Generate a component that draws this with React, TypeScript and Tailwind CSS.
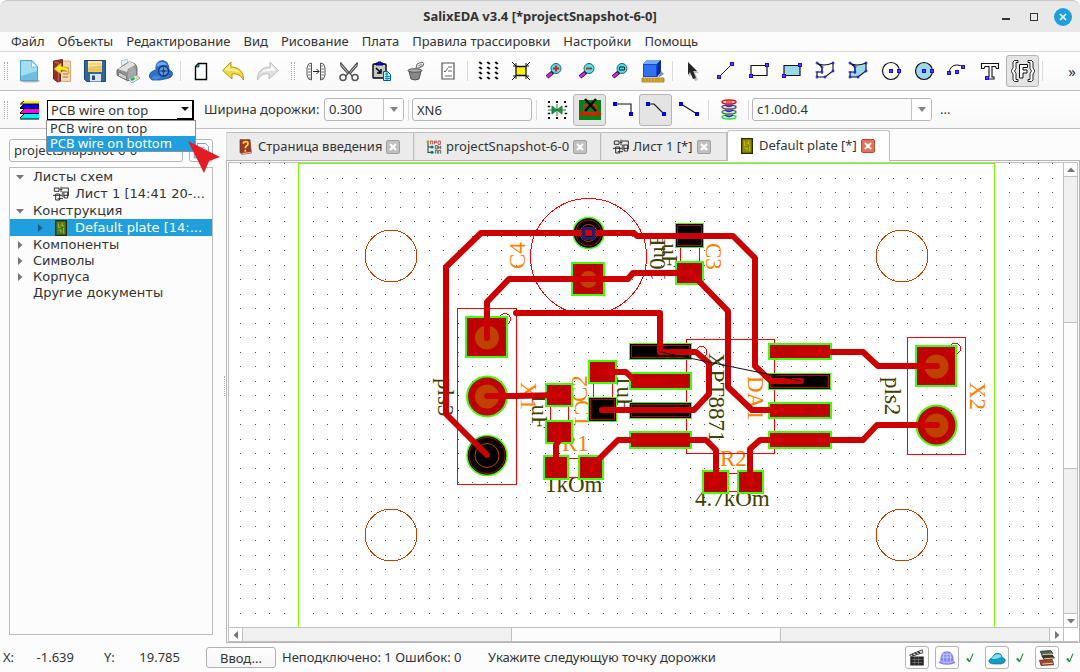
import type { ReactNode } from "react";

const menuItems = [
  "Файл",
  "Объекты",
  "Редактирование",
  "Вид",
  "Рисование",
  "Плата",
  "Правила трассировки",
  "Настройки",
  "Помощь",
];

function Icon({ children, size = 24 }: { children: ReactNode; size?: number }) {
  return (
    <svg width={size} height={size} viewBox="0 0 24 24" fill="none" stroke="none" className="shrink-0">
      {children}
    </svg>
  );
}

// small square handle used on the drawing tools
function Knob({ x, y }: { x: number; y: number }) {
  return (
    <>
      <rect x={x - 2} y={y - 2} width="4" height="4" fill="#1010e8" />
      <rect x={x - 1} y={y - 1} width="2" height="2" fill="#7a30e0" />
    </>
  );
}

const gridDots = [4, 12, 20];

const NewIcon = (
  <Icon>
    <ellipse cx="13" cy="22" rx="10" ry="1.6" fill="#b5b5b5" />
    <path d="M3.5 1.5h11.500l5.500 6V21.500h-17z" fill="#6dbfe2" stroke="#4ba3cb" />
    <path d="M4 2h10.500l5.500 6v4L4 17z" fill="#a4dcf0" />
    <path d="M14.500 2v6h6z" fill="#e8f7fc" stroke="#62b2d3" strokeWidth=".7" />
  </Icon>
);

const OpenIcon = (
  <Icon>
    <path d="M8 2h12.500v20.500H10z" fill="#f0d8b4" stroke="#d8a878" />
    <path d="M13 12h6M13 15h5M13 18h5M15 9h4" stroke="#ae7442" />
    <path d="M3.500 2l9-1.500V12l-2 1v9l-3 1-4-3z" fill="#913229" stroke="#732620" />
    <path d="M4.500 3l4 1v18" stroke="#ba5b43" strokeWidth="1.300" />
    <path d="M4 10l7-6v3.500c6 0 8 2 8 7-2-3-4-3.500-8-3.500v4z" fill="#ffe52b" stroke="#bb9918" strokeWidth=".7" />
  </Icon>
);

const SaveIcon = (
  <Icon>
    <path d="M1.500 1.500h21v21H4l-2.500-2z" fill="#3266a0" stroke="#1c4576" />
    <path d="M5 2h14v11H5z" fill="#f4cb59" />
    <path d="M5 2h14v4L5 9z" fill="#ffe69b" />
    <path d="M6 5h12M6 8h12M6 11h12" stroke="#dfb352" strokeWidth=".7" />
    <path d="M7 15h11v7.500H7z" fill="#dce3ea" />
    <path d="M9 16.500h3V21H9z" fill="#24517f" />
  </Icon>
);

const PrintIcon = (
  <Icon>
    <path d="M6 8L5 2l6-2 2 7z" fill="#e3f1fc" stroke="#8fb3d4" strokeWidth=".7" />
    <path d="M1 11l7-5 5-3q7 0 8 6v7l-9 6-11-6z" fill="#939393" stroke="#5b5b5b" strokeWidth=".8" />
    <path d="M2 10l7-4 4-3q5 0 6 3l-7 4-1 3z" fill="#e2e2e2" />
    <path d="M2.500 13l8 4v4l-8-4z" fill="#d0d0d0" stroke="#666" strokeWidth=".7" />
    <path d="M12 21v-7q1-5 4-6 4 0 4 5v3z" fill="#a8a8a8" />
    <path d="M12 20l8-4 4 3-8 5z" fill="#deecf7" stroke="#6889a4" strokeWidth=".7" />
    <path d="M14 20l4-2 1 2-3 2z" fill="#35a649" />
    <path d="M19 17l3 2-2 1z" fill="#e7d933" />
  </Icon>
);

const CloudIcon = (
  <Icon>
    <path d="M3 21Q-.5 19 .5 16q1-4 6.500-5Q6 5 10 2.500q4-2.500 8 1 2 3 2 7 4 2 3.500 5t-5 4L11 21z" fill="#2c72ca" stroke="#1c509a" strokeWidth=".8" />
    <path d="M7 8q1-5 6-5 4 0 5 3-5-1-11 2z" fill="#70a9e8" />
    <circle cx="14.500" cy="12" r="5" fill="#5b96dc" stroke="#12396e" strokeWidth="1.300" />
    <circle cx="14.500" cy="12" r="1.500" fill="#163f78" />
    <path d="M14.500 7v10M9.500 12h10" stroke="#163f78" strokeWidth=".8" />
    <path d="M3 18q4-3 9 0-3 4-9 2z" fill="#4389dc" />
  </Icon>
);

const PageIcon = (
  <Icon>
    <path d="M9.500 4.500h8v16h-11v-13z" fill="#fff" stroke="#000" strokeWidth="1.400" />
    <path d="M6 8l4-4v4z" fill="#148a83" stroke="#000" strokeWidth=".6" />
  </Icon>
);

const UndoIcon = (
  <Icon>
    <path d="M.7 11.500L9 3v5c8 0 13 5 12.500 13-3-5-6-6.500-11.500-6v5z" fill="#f6d735" stroke="#ad8c16" strokeWidth=".9" />
    <path d="M2.500 11.300L8 5.500V10c5-1 9 2 11 5-3-3-7-3-10.500-3z" fill="#fff4a4" />
  </Icon>
);

const RedoIcon = (
  <Icon>
    <path d="M23.300 11.500L15 3v5C7 8 2 13 2.500 21c3-5 6-6.500 11.500-6v5z" fill="#dedede" stroke="#b9b9b9" strokeWidth=".9" />
    <path d="M21.500 11.300L16 5.500V10c-5-1-9 2-11 5 3-3 7-3 10.500-3z" fill="#fafafa" />
  </Icon>
);

const MirrorIcon = (
  <Icon>
    <g stroke="#555">
      <path d="M7.500 4v17l-3-1-1.500-4V9l1.500-4zM16.500 4v17l3-1 1.500-4V9l-1.500-4z" />
      <path d="M5 7h2M4 10h3M4 13h3M4 16h3M5 19h2M17 7h2M17 10h3M17 13h3M17 16h3M17 19h2" strokeWidth=".8" />
      <path d="M9 12.500h6M12.500 10l2.500 2.500-2.500 2.500" stroke="#222" />
    </g>
  </Icon>
);

const CutIcon = (
  <Icon>
    <path d="M3.500 3.500l12 14M20.500 3.500l-12 14M3.500 3.500L4 7l7 8M20.500 3.500L20 7l-7 8" stroke="#555" strokeWidth="1.200" />
    <circle cx="6" cy="18.500" r="3" stroke="#555" strokeWidth="1.500" />
    <circle cx="18" cy="18.500" r="3" stroke="#555" strokeWidth="1.500" />
  </Icon>
);

const PasteIcon = (
  <Icon>
    <rect x="3" y="5" width="13" height="14" rx="1" fill="#c8c8c8" stroke="#000" strokeWidth="1.400" />
    <path d="M6 6V4h2V3h3v1h2v2z" fill="#1b1bd0" stroke="#000066" />
    <path d="M6 9l5 5M11 10v4H7" stroke="#000" strokeWidth="1.500" />
    <path d="M13.500 12.500h4l3 3v6h-7z" fill="#adf3fb" stroke="#005c89" />
    <path d="M15 15h3M15 17.500h5M15 19.500h5M17 13v8" stroke="#0070b0" strokeWidth=".8" />
  </Icon>
);

const BucketIcon = (
  <Icon>
    <path d="M6 12h12l-2 8q-4 2-8 0z" fill="#888" stroke="#505050" />
    <ellipse cx="12" cy="11.500" rx="7" ry="1.800" fill="#aaa" stroke="#555" />
    <path d="M13 9l1-4 5-2q3 1 1 4l-4 2z" fill="#f2f2f2" stroke="#666" />
    <path d="M15 7l4-2M15.500 9l4-3" stroke="#777" strokeWidth=".8" />
  </Icon>
);

const PropsIcon = (
  <Icon>
    <path d="M6 4h12v16H6z" fill="#fff" stroke="#555" strokeWidth="1.200" />
    <path d="M12 8h4M12 12h4M9 17h7M8 12l1 1 3-4" stroke="#666" />
  </Icon>
);

const GridIcon = (
  <Icon>
    {gridDots.map((x) =>
      [4, 9, 14, 19].map((y) => <path key={`${x}-${y}`} d={`M${x - 1} ${y - 1}h2v1h1v1h-2v-1h-1z`} fill="#111" stroke="#111" strokeWidth=".5" />),
    )}
  </Icon>
);

const FitIcon = (
  <Icon>
    <path d="M7 7.500h10v9H7z" fill="#fff200" stroke="#111" strokeWidth="1.300" />
    <path d="M3 3l4 4M21 3l-4 4M3 21l4-4M21 21l-4-4M4 7h3V4M17 4v3h3M4 17h3v3M17 20v-3h3" stroke="#111" />
  </Icon>
);

function ZoomIcon({ children }: { children: ReactNode }) {
  return (
    <Icon>
      <path d="M5 18l6-5" stroke="#111" strokeWidth="4" />
      <path d="M5 18l5-4" stroke="#ee18ee" strokeWidth="2.500" />
      <circle cx="14" cy="9.500" r="5" fill="#48e4ed" stroke="#16666b" />
      {children}
    </Icon>
  );
}

const CubeIcon = (
  <Icon>
    <path d="M1 19h22v4H1z" fill="#e5b83c" stroke="#90650c" strokeWidth=".7" />
    <path d="M3 20v2M6 20v2M9 20v2M12 20v2M15 20v2M18 20v2M21 20v2" stroke="#6c4a07" strokeWidth=".6" />
    <path d="M2 5l4-4h14v12l-4 5H2z" fill="#1447d4" />
    <path d="M2 5l4-4h14l-4 4z" fill="#74a9ff" />
    <path d="M3 6h12v11H3z" fill="#3271ed" />
    <path d="M16 5l4-4v12l-4 5z" fill="#0a2d9c" />
    <path d="M20 12l3 3-6 4z" fill="#8d8d98" />
  </Icon>
);

const PointerIcon = (
  <Icon>
    <path d="M9 5l9 9h-4l3 7-3 1-3-7-3 3z" fill="#bbb" />
    <path d="M7 3l9 9h-4l3 7-3 1-3-7-2 3z" fill="#252525" />
  </Icon>
);

const LineIcon = (
  <Icon>
    <path d="M5 18L18 5" stroke="#222" />
    <Knob x={5} y={18} />
    <Knob x={18} y={5} />
  </Icon>
);

function RectIcon({ fill }: { fill: string }) {
  return (
    <Icon>
      <path d="M4 6.500h16v10H4z" fill={fill} stroke="#111" strokeWidth="1.200" />
      <Knob x={4} y={17} />
      <Knob x={20} y={6} />
    </Icon>
  );
}

function PolyIcon({ fill }: { fill: string }) {
  return (
    <Icon>
      <path d="M4 4q6 4 16 0v8l-8 6H4v-5h5V8z" fill={fill} stroke="#111" strokeWidth="1.100" />
      <path d="M2.500 4h3M4 2.500v3M18.500 4h3M20 2.500v3M18.500 12h3M20 10.500v3M10.500 18h3M12 16.500v3M2.500 18h3M4 16.500v3M7.500 13h3M9 8v7M2.500 13h3M7.500 8h3" stroke="#1818f0" strokeWidth="1.200" />
    </Icon>
  );
}

function CircleIcon({ fill }: { fill: string }) {
  return (
    <Icon>
      <circle cx="12" cy="12" r="8.500" fill={fill} stroke="#111" strokeWidth="1.200" />
      <Knob x={12} y={12} />
      <Knob x={20} y={12} />
    </Icon>
  );
}

const ArcIcon = (
  <Icon>
    <path d="M4 14Q5 6 12 6q4 0 6 2" stroke="#111" />
    <Knob x={4} y={14} />
    <Knob x={12} y={13} />
    <Knob x={18} y={8} />
  </Icon>
);

const TextIcon = (
  <Icon>
    <path d="M3.500 4.500h17v5h-2l-1-2H14V18h2v2H9v-2h2V7.500H7l-1 2H3.500z" fill="#fff" stroke="#111" strokeWidth="1.100" />
    <Knob x={9} y={19} />
  </Icon>
);

const FormulaIcon = (
  <Icon>
    <path d="M8.500 5.500h8v3h-4.500v2.500h4v3h-4V19H8.500z" fill="#fff" stroke="#111" />
    <path d="M7 1.500H3.500L2 3v6L0 12l2 3v6l1.500 1.500H7v-2H5v-6L3.500 12 5 9.500v-6h2z" fill="#fff" stroke="#111" strokeWidth=".9" />
    <path d="M17 1.500h3.500L22 3v6l2 3-2 3v6l-1.500 1.500H17v-2h2v-6l1.500-2.500L19 9.500v-6h-2z" fill="#fff" stroke="#111" strokeWidth=".9" />
  </Icon>
);

const LayersIcon = (
  <Icon>
    <path d="M5 3h17v2.500H3z" fill="#ffee00" />
    <path d="M7 6h15v4H3z" fill="#0000ec" />
    <path d="M7 11h15v4H3z" fill="#ff00ee" />
    <path d="M7 16h15v5H3z" fill="#00f4f4" />
    <path d="M4 5.500L7 3M3 6h19M3 10l4-4M3 10.500h19M3 15l4-4M3 15.500h19M3 20l4-4M3 21h19" stroke="#000" />
  </Icon>
);

const SnapIcon = (
  <Icon>
    {gridDots.map((x) => [4, 20].map((y) => <rect key={`${x}-${y}`} x={x - 1} y={y - 1} width="2" height="2" fill="#111" />))}
    <path d="M3 8h2v1H3zM3 15h2v1H3zM20 8h2v1h-2zM20 15h2v1h-2z" fill="#111" stroke="#111" strokeWidth=".5" />
    <path d="M12 6v12M7 8l5 4-5 4zM17 8l-5 4 5 4zM3 12h18" fill="#269345" stroke="#16803b" />
  </Icon>
);

const DrcIcon = (
  <Icon>
    <path d="M1 2h22v20H1z" fill="#078018" />
    <path d="M6 7h12v8H6z" stroke="#b23811" strokeWidth="2" />
    <path d="M1 16h22" stroke="#f80c00" strokeWidth="2.500" />
    <path d="M7 1l11 12M18 1L7 13" stroke="#050505" strokeWidth="2.500" />
  </Icon>
);

function RouteIcon({ d }: { d: string }) {
  return (
    <Icon>
      <path d={d} stroke="#111" strokeWidth="1.100" />
      <rect x="2" y="4" width="4" height="4" fill="#0000e8" />
      <rect x="18" y="14" width="4" height="4" fill="#0000e8" />
    </Icon>
  );
}

const ViaIcon = (
  <Icon>
    <g fill="#ddd" strokeWidth="1.400">
      <ellipse cx="12" cy="19" rx="7" ry="2" stroke="#17e32d" />
      <ellipse cx="12" cy="14" rx="7" ry="2" stroke="#447d4a" />
      <ellipse cx="12" cy="9" rx="7" ry="2" stroke="#654078" />
      <ellipse cx="12" cy="4" rx="7" ry="2" stroke="#f10000" />
    </g>
    <path d="M8 7q4 3 8 0M8 12q4 3 8 0M8 17q4 3 8 0" stroke="#2626c9" strokeWidth="1.300" />
    <path d="M9 4h6" stroke="#da0000" />
  </Icon>
);

const SheetIcon = (
  <Icon size={16}>
    <path d="M2 3h7v5H2zM13 3h10v12M16 9h6v9h-5zM4 12h6v9H4zM0 14h23M10 5h4M12 1v8M7 19h8" stroke="#222" strokeWidth="1.400" />
    <path d="M13 8h3v9h-3z" fill="#777" />
  </Icon>
);

function BoardIcon({ color }: { color: string }) {
  return (
    <Icon size={16}>
      <path d="M4 1h16v22H4z" fill={color} stroke="#252b0c" strokeWidth="2" />
      <path d="M8 5v6h3M14 4v5h3M8 15h4v4M16 12v8M11 8h2" stroke="#ded92d" strokeWidth="1" />
    </Icon>
  );
}

const BookIcon = (
  <Icon size={16}>
    <path d="M3 1h15l2 20-14 2-3-3z" fill="#9e382a" stroke="#6c2821" />
    <path d="M6 21l14-2v2L7 23z" fill="#e5ba86" />
    <path d="M8 7q0-3 3.500-3T15 7q0 2-2 3t-2 4M11 16v3" stroke="#ffe01f" strokeWidth="2.500" />
  </Icon>
);

const TreeIcon = (
  <Icon size={16}>
    <path d="M3 5v16M3 12h8M3 20h8" stroke="#333" strokeWidth="1.500" />
    <circle cx="3" cy="4" r="2.300" fill="#a9a713" />
    <circle cx="9" cy="12" r="2.300" fill="#007b71" />
    <circle cx="9" cy="20" r="2.300" fill="#007b71" />
    <path d="M7 8V3h3v5M12.500 8V3h3v2.500h-3M18 3h3.500v5H18z" stroke="#ad2d2d" strokeWidth="1.200" />
    <path d="M14 10h3v5h-3zM19 10v5M19 12.500h3M22 10v5M14 22v-5h3v5M19 22v-5h3v5" stroke="#444" strokeWidth="1.200" />
  </Icon>
);

const LinkPageIcon = (
  <Icon size={18}>
    <path d="M3 5h13v16H3z" fill="#dfe7f7" stroke="#5c6c9c" />
    <path d="M7 2h11l4 4v13H7z" fill="#f9fbff" stroke="#6577a8" />
    <path d="M10 7h7M10 11h9M10 15h8" stroke="#9cabd2" strokeWidth="1.500" />
  </Icon>
);

const ClapperIcon = (
  <Icon size={18}>
    <path d="M3 10h18v12H3z" fill="#262626" />
    <path d="M2 8L19 1l1 4L4 10z" fill="#ddd" stroke="#222" />
    <path d="M5 7l3 2M9 5l3 2M13 3.500l3 2" stroke="#222" strokeWidth="2" />
    <path d="M5 14h14M5 18h14M9 11v10M14 11v10" stroke="#888" strokeWidth=".8" />
  </Icon>
);

const GlobeIcon = (
  <Icon size={18}>
    <path d="M3 16Q3 3 12 3t9 13q3 1 1 3-10 4-20 0-2-2 1-3z" fill="#8486ea" />
    <path d="M3 16q9 5 18 0M5 11h14M6 7h12M12 4v14M8 6q-2 5 0 12M16 6q2 5 0 12" stroke="#d7d8ff" />
  </Icon>
);

const BlueCloudIcon = (
  <Icon size={18}>
    <path d="M3 19q-4-3 0-6 3-1 4-4 3-5 8-3 3 1 4 5 5 2 4 5t-6 4H7z" fill="#139cc8" stroke="#08647d" strokeWidth=".8" />
    <path d="M5 13q3-7 9-6 5 1 3 4-5 3-12 2z" fill="#7edff3" />
  </Icon>
);

const BooksIcon = (
  <Icon size={18}>
    <path d="M3 3l14-1 3 4-15 2z" fill="#4f6753" stroke="#252e23" />
    <path d="M5 9l14-1 3 4-14 2z" fill="#3c332a" stroke="#1b1511" />
    <path d="M2 15l17-1 2 7-17 1z" fill="#a14a31" stroke="#572318" />
    <path d="M6 7.500l13-1M8 13l13-1M6 20l14-1" stroke="#ecd3a0" strokeWidth="1.300" />
  </Icon>
);

function ToolButton({ label, pressed = false, children }: { label: string; pressed?: boolean; children: ReactNode }) {
  return (
    <button
      type="button"
      aria-label={label}
      aria-pressed={pressed}
      className={
        pressed
          ? "flex h-8 w-[33px] shrink-0 items-center justify-center rounded-[3px] border border-[#b4b4b4] bg-[#e4e4e4]"
          : "flex h-8 w-[33px] shrink-0 items-center justify-center"
      }
    >
      {children}
    </button>
  );
}

function Separator() {
  return (
    <div className="flex w-[7px] shrink-0 justify-center">
      <div className="h-5 w-px bg-[#dadada]" />
    </div>
  );
}

function Grip() {
  return (
    <div className="flex w-3 shrink-0 justify-center">
      <div className="h-[18px] w-1 border-x border-dotted border-[#a8a8a8]" />
    </div>
  );
}

function ComboBox({ label, value, className }: { label: string; value: string; className: string }) {
  return (
    <div className={`relative flex h-[23px] shrink-0 overflow-hidden rounded-[3px] border border-[#b5b5b5] bg-[#fbfbfb] ${className}`}>
      <select aria-label={label} className="w-full appearance-none bg-transparent pl-1 outline-none">
        <option>{value}</option>
      </select>
      <div className="pointer-events-none absolute inset-y-0 right-0 flex w-5 items-center justify-center border-l border-[#c4c4c4] bg-white">
        <svg width="8" height="5" viewBox="0 0 8 5">
          <path d="M0 0h8L4 5z" fill="#858585" />
        </svg>
      </div>
    </div>
  );
}

function MainToolbar() {
  return (
    <div className="flex h-[39px] shrink-0 items-center overflow-hidden border-b border-[#c0c0c0] bg-gradient-to-b from-white to-[#f8f8f8]">
      <Grip />
      <ToolButton label="Создать">{NewIcon}</ToolButton>
      <ToolButton label="Открыть">{OpenIcon}</ToolButton>
      <ToolButton label="Сохранить">{SaveIcon}</ToolButton>
      <ToolButton label="Печать">{PrintIcon}</ToolButton>
      <ToolButton label="Облако">{CloudIcon}</ToolButton>
      <Separator />
      <ToolButton label="Лист">{PageIcon}</ToolButton>
      <ToolButton label="Отменить">{UndoIcon}</ToolButton>
      <ToolButton label="Вернуть">{RedoIcon}</ToolButton>
      <div className="w-1 shrink-0" />
      <Grip />
      <ToolButton label="Отразить">{MirrorIcon}</ToolButton>
      <ToolButton label="Вырезать">{CutIcon}</ToolButton>
      <ToolButton label="Вставить">{PasteIcon}</ToolButton>
      <ToolButton label="Заливка">{BucketIcon}</ToolButton>
      <ToolButton label="Свойства">{PropsIcon}</ToolButton>
      <Separator />
      <ToolButton label="Сетка">{GridIcon}</ToolButton>
      <ToolButton label="Вписать">{FitIcon}</ToolButton>
      <ToolButton label="Увеличить">
        <ZoomIcon>
          <path d="M11 9.500h6M14 6.500v6" stroke="#f01111" strokeWidth="1.800" />
        </ZoomIcon>
      </ToolButton>
      <ToolButton label="Уменьшить">
        <ZoomIcon>
          <path d="M11 9.500h6" stroke="#f01111" strokeWidth="1.800" />
        </ZoomIcon>
      </ToolButton>
      <ToolButton label="Масштаб">
        <ZoomIcon>
          <path d="M11.500 8h5v3h-5z" stroke="#111" />
        </ZoomIcon>
      </ToolButton>
      <ToolButton label="3D">{CubeIcon}</ToolButton>
      <Separator />
      <ToolButton label="Выбор">{PointerIcon}</ToolButton>
      <ToolButton label="Линия">{LineIcon}</ToolButton>
      <ToolButton label="Прямоугольник">
        <RectIcon fill="#fff" />
      </ToolButton>
      <ToolButton label="Залитый прямоугольник">
        <RectIcon fill="#9bd9e8" />
      </ToolButton>
      <ToolButton label="Полигон">
        <PolyIcon fill="#fff" />
      </ToolButton>
      <ToolButton label="Залитый полигон">
        <PolyIcon fill="#9bd9e8" />
      </ToolButton>
      <ToolButton label="Окружность">
        <CircleIcon fill="#fff" />
      </ToolButton>
      <ToolButton label="Круг">
        <CircleIcon fill="#9bd9e8" />
      </ToolButton>
      <ToolButton label="Дуга">{ArcIcon}</ToolButton>
      <ToolButton label="Текст">{TextIcon}</ToolButton>
      <ToolButton label="Параметр" pressed>
        {FormulaIcon}
      </ToolButton>
      <Separator />
      <button type="button" className="mr-1 ml-auto text-[15px] leading-4">
        »
      </button>
    </div>
  );
}

function WireToolbar() {
  return (
    <div className="flex h-[38px] shrink-0 items-center border-b border-[#c0c0c0] bg-gradient-to-b from-white to-[#f8f8f8]">
      <Grip />
      <ToolButton label="Слои">{LayersIcon}</ToolButton>
      <div className="relative ml-0.5 h-5 w-[147px] shrink-0 border border-black bg-white">
        <select aria-label="Слой" className="h-full w-full appearance-none bg-transparent pl-[3px] outline-none">
          <option>PCB wire on top</option>
          <option>PCB wire on bottom</option>
        </select>
        <div className="pointer-events-none absolute top-0 right-0 flex h-[18px] w-4 items-center justify-center border-r border-b border-black bg-white">
          <svg width="8" height="4" viewBox="0 0 8 4">
            <path d="M0 0h8L4 4z" fill="#111" />
          </svg>
        </div>
        <ul role="listbox" aria-label="Слой" className="absolute top-[19px] -left-0.5 z-10 w-[150px] border border-[#8e8e8e] bg-white">
          <li role="option" aria-selected={false} className="h-[15px] pl-[3px] leading-[15px]">
            PCB wire on top
          </li>
          <li role="option" aria-selected className="h-[15px] bg-[#209fdf] pl-[3px] leading-[15px] text-white">
            PCB wire on bottom
          </li>
        </ul>
        <svg width="33" height="33" viewBox="0 0 33 33" className="absolute top-10 left-[140px] z-20">
          <path d="M0 0l32 16-11 4-5 12z" fill="#e31b23" />
        </svg>
      </div>
      <label htmlFor="net" className="ml-2.5 w-[120px] shrink-0 whitespace-nowrap">
        Ширина дорожки:
      </label>
      <ComboBox label="Ширина дорожки" value="0.300" className="w-20" />
      <div className="w-px shrink-0" />
      <Separator />
      <input id="net" aria-label="Цепь" defaultValue="XN6" className="h-[23px] w-[120px] shrink-0 rounded-[3px] border border-[#b5b5b5] bg-[#fbfbfb] pl-1 outline-none" />
      <div className="w-px shrink-0" />
      <Separator />
      <ToolButton label="Привязка">{SnapIcon}</ToolButton>
      <ToolButton label="Проверка" pressed>
        {DrcIcon}
      </ToolButton>
      <ToolButton label="Прямой угол">
        <RouteIcon d="M4 6h16v10" />
      </ToolButton>
      <ToolButton label="Скос" pressed>
        <RouteIcon d="M4 6h6l10 10" />
      </ToolButton>
      <ToolButton label="Прямая">
        <RouteIcon d="M4 6l16 10" />
      </ToolButton>
      <Separator />
      <ToolButton label="Переход">{ViaIcon}</ToolButton>
      <Separator />
      <ComboBox label="Тип перехода" value="c1.0d0.4" className="w-[180px]" />
      <button type="button" className="ml-2">
        ...
      </button>
    </div>
  );
}

interface TreeRow {
  text: string;
  open?: boolean;
  leaf?: boolean;
  icon?: ReactNode;
  selected?: boolean;
}

const treeRows: TreeRow[] = [
  { text: "Листы схем", open: true },
  { text: "Лист 1 [14:41 20-...", icon: SheetIcon, leaf: true },
  { text: "Конструкция", open: true },
  { text: "Default plate [14:...", icon: <BoardIcon color="#477c24" />, selected: true },
  { text: "Компоненты" },
  { text: "Символы" },
  { text: "Корпуса" },
  { text: "Другие документы", leaf: true },
];

function ProjectPanel() {
  return (
    <aside className="flex w-[222px] shrink-0 flex-col pt-2.5 pr-[9px] pb-2 pl-[9px]">
      <div className="flex justify-between">
        <select aria-label="Проект" className="h-[23px] w-[174px] appearance-none rounded-[3px] border border-[#b5b5b5] bg-[#fcfcfc] pl-1 outline-none">
          <option>projectSnapshot-6-0</option>
        </select>
        <button type="button" aria-label="Документ" className="flex h-[23px] w-6 items-center justify-center rounded-[3px] border border-[#b5b5b5] bg-white">
          {LinkPageIcon}
        </button>
      </div>
      <ul role="tree" className="mt-[5px] min-h-0 flex-1 overflow-hidden border border-[#bcbcbc] bg-[#fcfcfc] font-['DejaVu_Sans',sans-serif] text-[13px]">
        {treeRows.map((row, i) => (
          <li
            key={row.text}
            role="treeitem"
            aria-selected={!!row.selected}
            className={`flex items-center whitespace-nowrap ${i < 5 ? "h-[17px]" : "h-4"} ${row.icon ? "pl-5" : ""} ${
              row.selected ? "bg-[#209fdf] text-white" : ""
            }`}
          >
            <span className="flex w-[23px] shrink-0 justify-center pr-1">
              {!row.leaf && (
                <svg width="8" height="8" viewBox="0 0 8 8">
                  <path d={row.open ? "M0 2h8L4 6.500z" : "M2 0v8l4.500-4z"} fill={row.selected ? "#155f86" : "#777"} />
                </svg>
              )}
            </span>
            {row.icon && <span className="mr-1.5 flex">{row.icon}</span>}
            {row.text}
          </li>
        ))}
      </ul>
    </aside>
  );
}

const tabs = [
  { text: "Страница введения", icon: BookIcon, width: "w-[188px]" },
  { text: "projectSnapshot-6-0", icon: TreeIcon, width: "w-[187px]" },
  { text: "Лист 1 [*]", icon: SheetIcon, width: "w-[126px]" },
  { text: "Default plate [*]", icon: <BoardIcon color="#8e8b00" />, width: "w-[163px]", active: true },
];

function TabBar() {
  return (
    <div role="tablist" className="flex h-8 shrink-0 items-end border-b border-[#b4b4b4]">
      {tabs.map((tab) => (
        <div
          key={tab.text}
          role="tab"
          aria-selected={!!tab.active}
          className={`flex shrink-0 items-center whitespace-nowrap border-t border-r border-[#bebebe] pl-[11px] ${tab.width} ${
            tab.active ? "-mb-px h-[31px] rounded-t-[3px] border-l bg-white" : "h-7 border-l border-l-[#dcdcdc] bg-[#ebebeb]"
          }`}
        >
          {tab.icon}
          <span className="mr-1 ml-1">{tab.text}</span>
          <button
            type="button"
            aria-label="Закрыть"
            className={`flex size-3.5 items-center justify-center rounded-[2px] border ${
              tab.active ? "border-[#c8452d] bg-[#e27358]" : "border-[#a0a0a0] bg-[#c0c0c0]"
            }`}
          >
            <svg width="8" height="8" viewBox="0 0 8 8">
              <path d="M1 1l6 6M7 1L1 7" stroke="#fff" strokeWidth="2" />
            </svg>
          </button>
        </div>
      ))}
    </div>
  );
}

// x, y, width, height of the copper pads
const redPads = [
  [466, 317, 41, 40],
  [572, 263, 32, 32],
  [676, 262, 27, 22],
  [630, 373, 61, 16],
  [630, 432, 61, 16],
  [769, 344, 62, 15],
  [769, 403, 62, 15],
  [769, 432, 62, 16],
  [546, 384, 26, 22],
  [546, 421, 26, 22],
  [589, 361, 27, 22],
  [544, 456, 24, 23],
  [579, 456, 24, 23],
  [703, 471, 25, 22],
  [738, 471, 25, 22],
  [916, 346, 40, 40],
];

const blackPads = [
  [675, 223, 28, 24],
  [629, 343, 62, 16],
  [629, 402, 62, 16],
  [768, 373, 62, 16],
  [588, 397, 28, 24],
];

const tracks = [
  "M487 455L446 414V267L481 233H634L637 236H733L755 258V366L771 381H801",
  "M487 338V302L509 279H628L633 273H691L728 311V387L752 410H801",
  "M516 313H660V352H696L709 363V394L694 410H602",
  "M487 396H516L561 395",
  "M602 372H626L635 381H661",
  "M559 431V440L556 445V467",
  "M591 467L618 440H706L716 450V483",
  "M750 483V449L760 440H863L877 425H937",
  "M799 352H863L878 366H937",
];

const labels = [
  { text: "C4", x: 525, y: 269, r: -90, fill: "#ff8000" },
  { text: "C3", x: 706, y: 243, r: 90, fill: "#ff8000" },
  { text: "X2", x: 970, y: 382, r: 90, fill: "#ff8000" },
  { text: "X1", x: 521, y: 382, r: 90, fill: "#ff8000" },
  { text: "C2", x: 587, y: 402, r: -90, fill: "#ff8000" },
  { text: "C1", x: 575, y: 400, r: 90, fill: "#ff8000" },
  { text: "DA1", x: 748, y: 376, r: 90, fill: "#ff8000" },
  { text: "R1", x: 562, y: 451, r: 0, fill: "#ff8000" },
  { text: "R2", x: 720, y: 466, r: 0, fill: "#ff8000" },
  { text: "pls3", x: 438, y: 378, r: 90, fill: "#404000" },
  { text: "pls2", x: 885, y: 377, r: 90, fill: "#404000" },
  { text: "XPT8871", x: 709, y: 353, r: 90, fill: "#404000" },
  { text: "1uF", x: 532, y: 393, r: 90, fill: "#404000" },
  { text: "1uF", x: 617, y: 375, r: 90, fill: "#404000" },
  { text: "1uF", x: 662, y: 232, r: 90, fill: "#404000" },
  { text: "10uF", x: 665, y: 281, r: -90, fill: "#404000" },
  { text: "1kOm", x: 545, y: 492, r: 0, fill: "#404000" },
  { text: "4.7kOm", x: 695, y: 506, r: 0, fill: "#404000" },
];

const mountingHoles = [
  [391, 256],
  [391, 535],
  [902, 256],
  [902, 535],
];

function Board() {
  return (
    <svg width="834" height="464" viewBox="229 163 834 464" fill="none" className="block">
      <defs>
        <pattern id="grid" x="429" y="192" width="29" height="29" patternUnits="userSpaceOnUse">
          <path d="M0 0h1v1H0zM14 0h1v1h-1zM0 15h1v1H0zM14 15h1v1h-1z" fill="#555" />
        </pattern>
      </defs>
      <rect x="229" y="163" width="834" height="464" fill="url(#grid)" shapeRendering="crispEdges" />
      <path d="M298.500 627V163.500H994.500V627" stroke="#80ff00" />

      {labels.map((l) => (
        <text
          key={`${l.x}-${l.y}`}
          transform={`translate(${l.x} ${l.y}) rotate(${l.r})`}
          fill={l.fill}
          className="font-['Liberation_Serif',serif] text-[23px]"
        >
          {l.text}
        </text>
      ))}

      <g stroke="#ff0000" shapeRendering="crispEdges">
        <path d="M457.500 308.500h59v176h-59zM907.500 337.500h58v117h-58zM686.500 339.500h88v114h-88z" />
        <path d="M680.500 247v15M699.500 247v15M550.500 406v15M568.500 406v15M593.500 383v15M612.500 383v15" />
        <path d="M568 458.500h11M568 477.500h11M728 473.500h10M728 491.500h10" />
        <circle cx="588.5" cy="256.5" r="58" />
        <circle cx="505" cy="319" r="5.500" />
        <circle cx="701.5" cy="352" r="5.500" />
        <circle cx="955" cy="348.5" r="5.500" />
      </g>

      <g stroke="#c04000" shapeRendering="crispEdges">
        {mountingHoles.map(([x, y]) => (
          <circle key={`${x}-${y}`} cx={x} cy={y} r="26" />
        ))}
      </g>

      {redPads.map(([x, y, w, h]) => (
        <rect key={`${x}-${y}`} x={x} y={y} width={w} height={h} fill="#be0000" stroke="#40ff00" strokeWidth="2" />
      ))}
      {blackPads.map(([x, y, w, h]) => (
        <g key={`${x}-${y}`}>
          <rect x={x + 0.5} y={y + 0.5} width={w} height={h} fill="#000" stroke="#40ff00" />
          <rect x={x + 2.5} y={y + 2.5} width={w - 4} height={h - 4} stroke="#be0000" />
        </g>
      ))}

      <g fill="#be0000" stroke="#40ff00" strokeWidth="2">
        <circle cx="487" cy="396.5" r="20" />
        <circle cx="936.5" cy="425.5" r="20" />
        <circle cx="487" cy="455.5" r="20" fill="#000" strokeWidth="1.500" />
        <circle cx="588.5" cy="233" r="15.500" fill="#000" strokeWidth="1.500" />
      </g>
      <g fill="#c04000">
        <circle cx="487" cy="337.500" r="12" />
        <circle cx="487" cy="396.500" r="12" />
        <circle cx="936.5" cy="366.500" r="12" />
        <circle cx="936.5" cy="425.500" r="12" />
        <circle cx="588.5" cy="279.500" r="8.500" />
      </g>
      <g strokeWidth="1">
        <circle cx="487" cy="455.5" r="18" stroke="#be0000" />
        <circle cx="487" cy="455.5" r="12" stroke="#c04000" />
        <circle cx="588.5" cy="233" r="13" stroke="#be0000" />
        <circle cx="588.5" cy="233" r="8.500" stroke="#c04000" />
      </g>

      {tracks.map((d) => (
        <path key={d} d={d} stroke="#cc0000" strokeWidth="6" strokeLinecap="round" strokeLinejoin="round" />
      ))}
      <rect x="583.5" y="228.500" width="10" height="10" stroke="#2a1a6b" strokeWidth="3" />
      <path d="M660 352l141 29" stroke="#111" />
    </svg>
  );
}

function Arrow({ d }: { d: string }) {
  return (
    <svg width="8" height="8" viewBox="0 0 8 8">
      <path d={d} fill="#777" />
    </svg>
  );
}

function Editor() {
  return (
    <main className="flex min-w-0 flex-1 flex-col">
      <TabBar />
      <div className="min-h-0 flex-1 border-r border-b border-l border-[#b4b4b4] bg-white pt-px pr-px pl-px">
        <div className="flex h-full flex-col border-t border-l border-[#c0c0c0]">
          <div className="flex min-h-0 flex-1">
            <div className="min-w-0 flex-1 overflow-hidden">
              <Board />
            </div>
            <div className="flex w-[15px] shrink-0 flex-col border-x border-[#c0c0c0]">
              <button type="button" aria-label="Вверх" className="flex h-3.5 items-center justify-center border-b border-[#c0c0c0]">
                <Arrow d="M0 6h8L4 1.500z" />
              </button>
              <div className="h-[145px] bg-[#f0f0f0]" />
              <div className="h-[147px] border-y border-[#c0c0c0] bg-[#fcfcfc]" />
              <div className="flex-1 bg-[#f0f0f0]" />
              <button type="button" aria-label="Вниз" className="flex h-3.5 items-center justify-center border-t border-[#c0c0c0]">
                <Arrow d="M0 2h8L4 6.500z" />
              </button>
            </div>
          </div>
          <div className="flex h-[15px] shrink-0 border-y border-[#c0c0c0]">
            <button type="button" aria-label="Влево" className="flex w-3.5 items-center justify-center border-r border-[#c0c0c0]">
              <Arrow d="M6 0v8L1.500 4z" />
            </button>
            <div className="w-[268px] bg-[#f0f0f0]" />
            <div className="w-[270px] border-x border-[#c0c0c0] bg-[#fcfcfc]" />
            <div className="flex-1 bg-[#f0f0f0]" />
            <button type="button" aria-label="Вправо" className="mr-3.5 flex w-[15px] items-center justify-center border-x border-[#c0c0c0]">
              <Arrow d="M2 0v8l4.500-4z" />
            </button>
          </div>
        </div>
      </div>
    </main>
  );
}

const statusButtons = [
  { label: "Запись", icon: ClapperIcon, ok: false },
  { label: "Сеть", icon: GlobeIcon, ok: true },
  { label: "Сервер", icon: BlueCloudIcon, ok: true },
  { label: "Библиотека", icon: BooksIcon, ok: true },
];

function StatusBar() {
  return (
    <footer className="flex h-[29px] shrink-0 items-center whitespace-nowrap pr-px pl-[3px]">
      <span className="w-6">X:</span>
      <span className="w-[47px] text-right">-1.639</span>
      <span className="ml-[30px] w-6">Y:</span>
      <span className="w-[52px] text-right">19.785</span>
      <button type="button" className="ml-[26px] h-[21px] w-[70px] rounded-[3px] border border-[#b0b0b0] bg-gradient-to-b from-white to-[#f6f6f6] leading-4">
        Ввод...
      </button>
      <span className="ml-1.5 w-[206px]">Неподключено: 1 Ошибок: 0</span>
      <span>Укажите следующую точку дорожки</span>
      <div className="ml-auto flex items-center gap-1.5">
        {statusButtons.map((b) => (
          <div key={b.label} className="flex items-center gap-1.5">
            <button type="button" aria-label={b.label} className="flex h-[23px] w-6 items-center justify-center rounded-[3px] border border-[#b4b4b4] bg-white">
              {b.icon}
            </button>
            {b.ok && (
              <svg width="14" height="12" viewBox="0 0 14 12">
                <path d="M1 7l2-1 1.500 2.500L7.500 1.500l1 .3L5 10H4z" fill="#168a22" />
              </svg>
            )}
          </div>
        ))}
      </div>
    </footer>
  );
}

function App() {
  return (
    <div className="flex h-screen flex-col overflow-hidden bg-[#fcfcfc] font-['Noto_Sans',sans-serif] text-[13px] text-[#333]">
      <header className="relative flex h-8 shrink-0 items-center justify-center rounded-t-lg border-t border-[#c6c6c6] bg-[#e8e8e8]">
        <h1 className="text-[13px] font-bold">SalixEDA v3.4 [*projectSnapshot-6-0]</h1>
        <div className="absolute inset-y-0 right-2 flex items-center gap-4">
          <button type="button" aria-label="Свернуть" className="h-1.5 w-2 border-b-2 border-[#333]" />
          <button type="button" aria-label="Развернуть" className="ml-1 h-2 w-2 border border-[#333]" />
          <button type="button" aria-label="Закрыть" className="flex size-[18px] items-center justify-center rounded-full bg-[#209fdf]">
            <svg width="8" height="8" viewBox="0 0 8 8">
              <path d="M1 1l6 6M7 1L1 7" stroke="#fff" strokeWidth="1.600" />
            </svg>
          </button>
        </div>
      </header>
      <nav className="flex h-5 shrink-0 items-center gap-[13px] border-b border-[#d8d8d8] pb-0.5 pl-[11px]">
        {menuItems.map((item) => (
          <button key={item} type="button" className="whitespace-nowrap leading-4">
            {item}
          </button>
        ))}
      </nav>
      <MainToolbar />
      <WireToolbar />
      <div className="flex min-h-0 flex-1">
        <ProjectPanel />
        <div className="flex w-1 shrink-0 items-center justify-center">
          <div className="h-5 border-l border-dotted border-[#aaa]" />
        </div>
        <Editor />
      </div>
      <StatusBar />
    </div>
  );
}

export default App;
